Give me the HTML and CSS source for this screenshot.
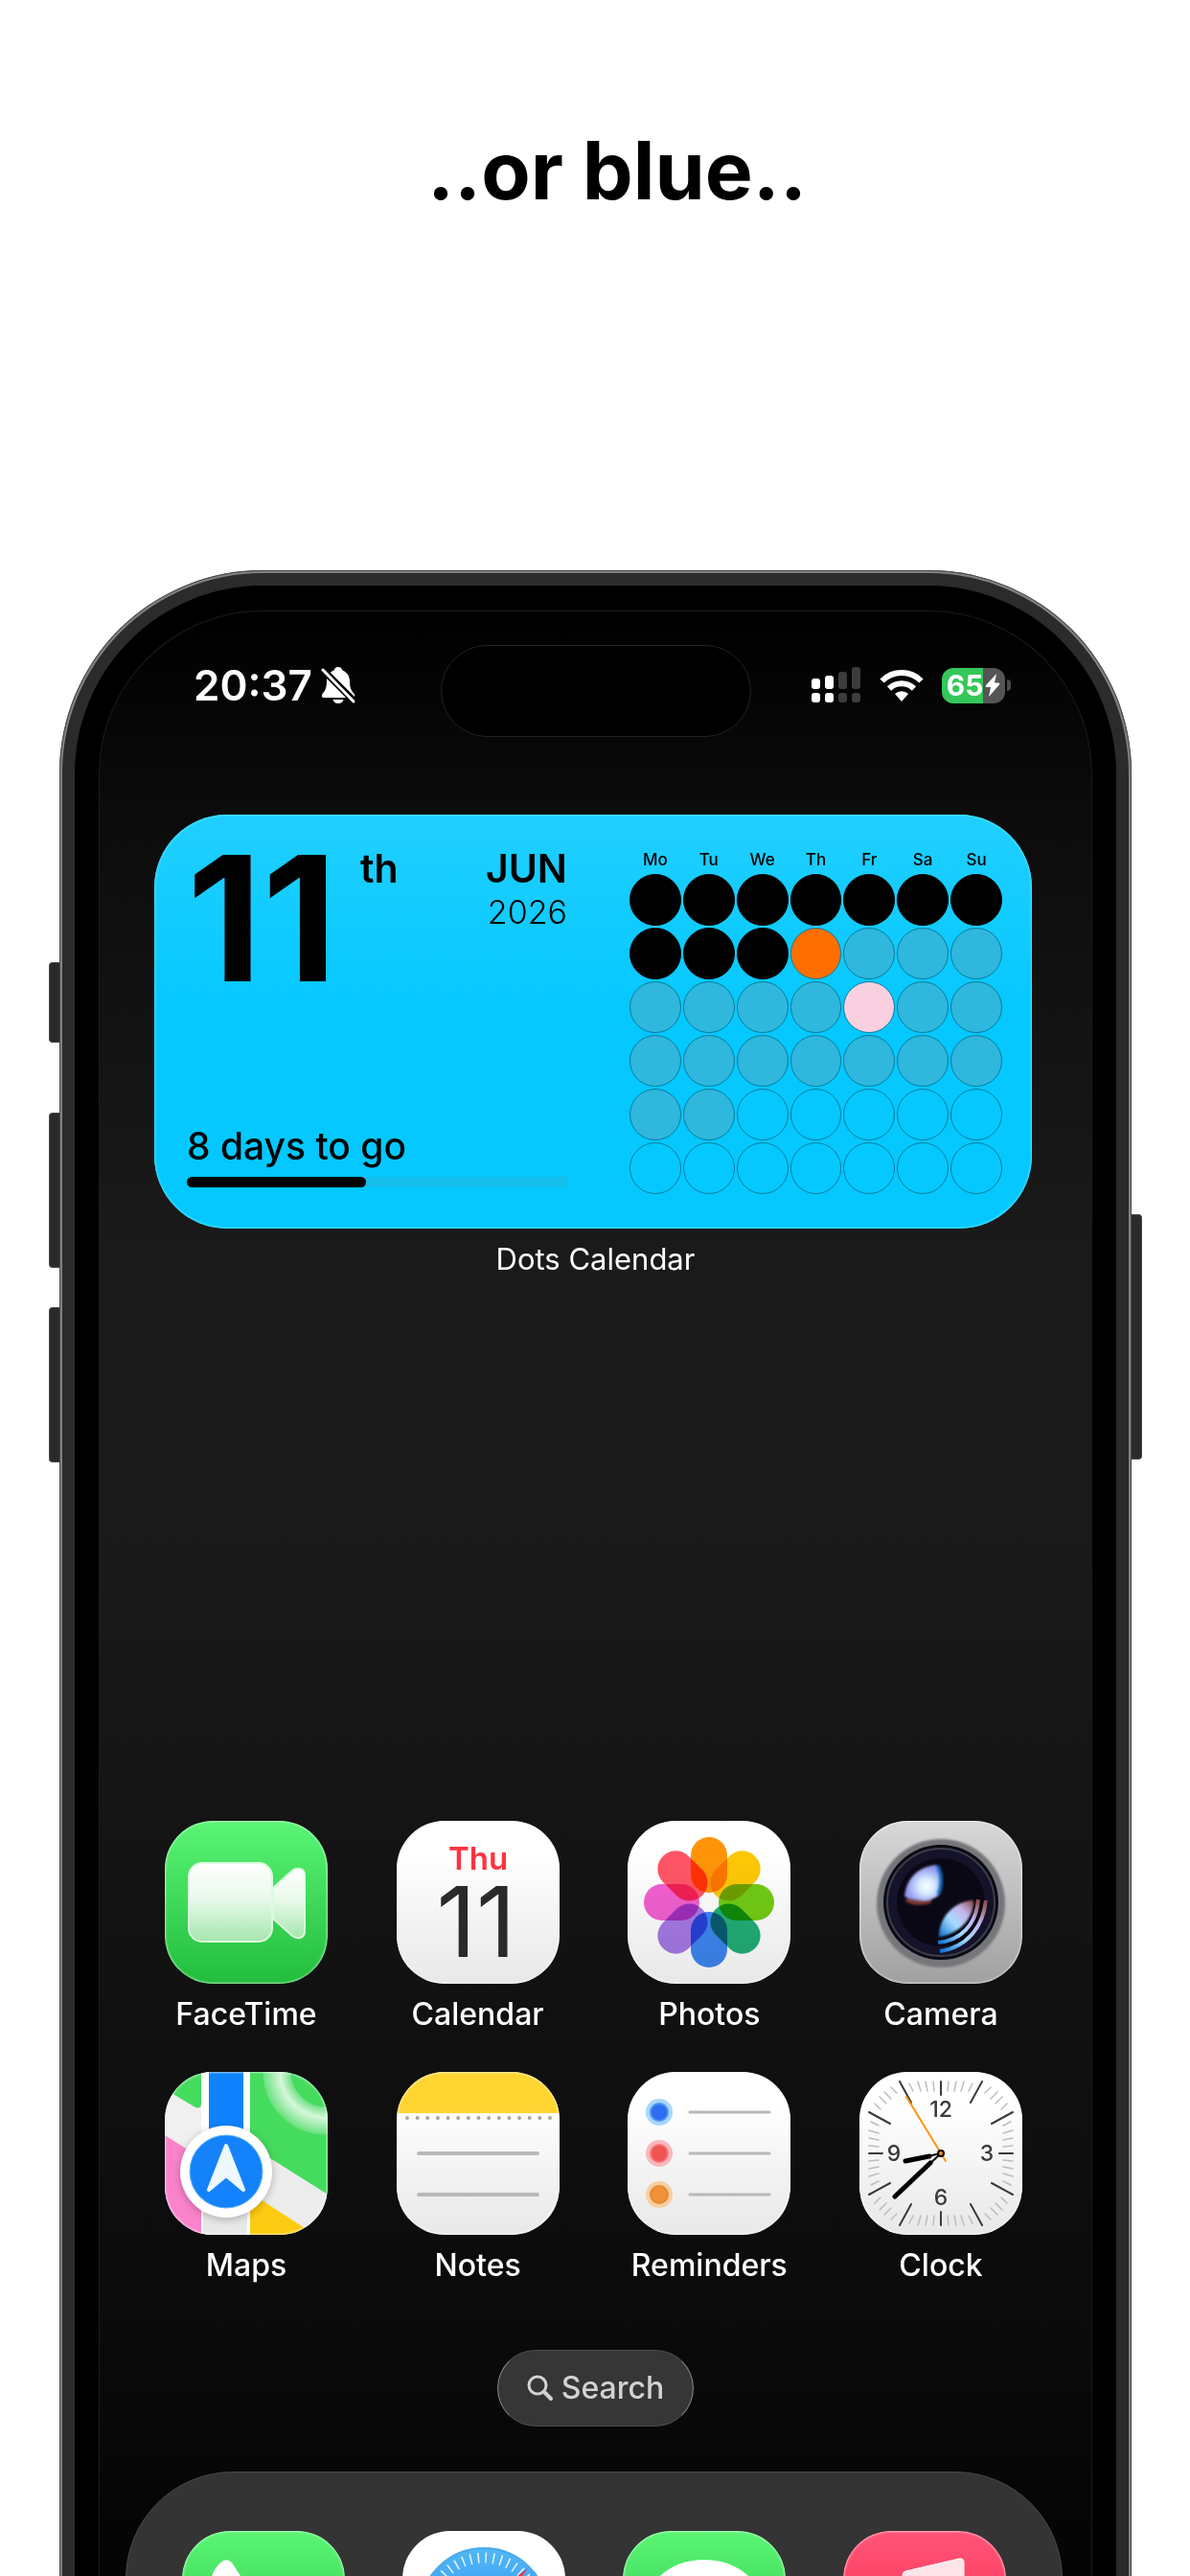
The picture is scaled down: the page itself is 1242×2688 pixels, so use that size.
FILE: index.html
```html
<!DOCTYPE html>
<html lang="en">
<head>
  <meta charset="UTF-8">
  <meta name="viewport" content="width=device-width, initial-scale=1.0">
  <title>Dots Calendar</title>
  <link rel="stylesheet" href="styles.css">
</head>
<body>
  <div class="page">
    <header class="headline">
      <h1>..or blue..</h1>
    </header>

    <main class="phone">
      <span class="side-button action"></span>
      <span class="side-button volume-up"></span>
      <span class="side-button volume-down"></span>
      <span class="side-button power"></span>

      <div class="bezel">
        <div class="screen">

          <div class="status">
            <div class="status-left">
              <span class="time">20:37</span>
              <svg class="bell" width="36" height="40" viewBox="0 0 36 40">
                <path fill="#fff" d="M18 1c2.600 0 4 1.500 4.400 3.600C27.500 6.500 30 11 30 16c0 7 2 10 4.500 13 1.500 2 .5 4-1.500 4H3c-2 0-3-2-1.500-4C4 26 6 23 6 16 6 11 8.500 6.500 13.600 4.600 14 2.500 15.400 1 18 1zM12.500 35h11c-.5 2.500-2.500 4-5.500 4s-5-1.500-5.500-4z"/>
                <path stroke="#050505" stroke-width="7" d="M1 3l34 34"/>
                <path stroke="#fff" stroke-width="3" stroke-linecap="round" d="M2 4l32 33"/>
              </svg>
            </div>
            <div class="island"></div>
            <div class="status-right">
              <svg width="52" height="38" viewBox="0 0 52 38">
                <g fill="#fff">
                  <rect x="0" y="12" width="9" height="11" rx="3"/>
                  <rect x="14" y="9" width="9" height="14" rx="3"/>
                  <rect x="0" y="27" width="9" height="10" rx="3"/>
                  <rect x="14" y="27" width="9" height="10" rx="3"/>
                </g>
                <g fill="#3c3c3c">
                  <rect x="28" y="5" width="9" height="18" rx="3"/>
                  <rect x="42" y="0" width="9" height="23" rx="3"/>
                  <rect x="28" y="27" width="9" height="10" rx="3"/>
                  <rect x="42" y="27" width="9" height="10" rx="3"/>
                </g>
              </svg>
              <svg width="46" height="34" viewBox="0 0 46 34" fill="none" stroke="#fff">
                <path stroke-width="6" d="M2.500 12.500a29 29 0 0 1 41 0"/>
                <path stroke-width="6" d="M10 20.500a18.500 18.500 0 0 1 26 0"/>
                <path fill="#fff" stroke="none" d="M23 34l-7-8a10.500 10.500 0 0 1 14 0z"/>
              </svg>
              <div class="battery">
                <span class="battery-body">65<svg width="16" height="24" viewBox="0 0 16 24"><path fill="#fff" d="M12 0L1 12q-1 2 1 2h4L4 24 15 11.500q1-2-1-2h-4z"/></svg></span>
                <span class="battery-cap"></span>
              </div>
            </div>
          </div>

          <section class="widget">
            <div class="today">
              <div class="date">
                <div class="day"><span class="number">11</span><span class="suffix">th</span></div>
                <div class="month-year">
                  <div class="month">JUN</div>
                  <div class="year">2026</div>
                </div>
              </div>
              <div class="countdown">
                <label for="countdown">8 days to go</label>
                <progress id="countdown" value="47" max="100"></progress>
              </div>
            </div>
            <table class="dots">
              <thead>
                <tr><th>Mo</th><th>Tu</th><th>We</th><th>Th</th><th>Fr</th><th>Sa</th><th>Su</th></tr>
              </thead>
              <tbody>
                <tr><td><i class="dot past"></i></td><td><i class="dot past"></i></td><td><i class="dot past"></i></td><td><i class="dot past"></i></td><td><i class="dot past"></i></td><td><i class="dot past"></i></td><td><i class="dot past"></i></td></tr>
                <tr><td><i class="dot past"></i></td><td><i class="dot past"></i></td><td><i class="dot past"></i></td><td><i class="dot now"></i></td><td><i class="dot future"></i></td><td><i class="dot future"></i></td><td><i class="dot future"></i></td></tr>
                <tr><td><i class="dot future"></i></td><td><i class="dot future"></i></td><td><i class="dot future"></i></td><td><i class="dot future"></i></td><td><i class="dot event"></i></td><td><i class="dot future"></i></td><td><i class="dot future"></i></td></tr>
                <tr><td><i class="dot future"></i></td><td><i class="dot future"></i></td><td><i class="dot future"></i></td><td><i class="dot future"></i></td><td><i class="dot future"></i></td><td><i class="dot future"></i></td><td><i class="dot future"></i></td></tr>
                <tr><td><i class="dot future"></i></td><td><i class="dot future"></i></td><td><i class="dot"></i></td><td><i class="dot"></i></td><td><i class="dot"></i></td><td><i class="dot"></i></td><td><i class="dot"></i></td></tr>
                <tr><td><i class="dot"></i></td><td><i class="dot"></i></td><td><i class="dot"></i></td><td><i class="dot"></i></td><td><i class="dot"></i></td><td><i class="dot"></i></td><td><i class="dot"></i></td></tr>
              </tbody>
            </table>
          </section>
          <p class="widget-name">Dots Calendar</p>

          <nav class="apps">
            <a class="app" href="#">
              <span class="icon green">
                <svg viewBox="0 0 170 170">
                  <defs>
                    <linearGradient id="cam" x1="0" y1="0" x2="0" y2="1">
                      <stop offset="0" stop-color="#fff"/>
                      <stop offset=".45" stop-color="#e9f9eb"/>
                      <stop offset="1" stop-color="#a5e6ae"/>
                    </linearGradient>
                  </defs>
                  <g fill="url(#cam)" stroke="#dcfbe0" stroke-width="2">
                    <path d="M113 70l20-18q4-3 8-2 5 1 5 7v58q0 6-5 7-4 1-8-2l-20-18z"/>
                    <rect x="25" y="44" width="87" height="82" rx="14"/>
                  </g>
                </svg>
              </span>
              <span class="label">FaceTime</span>
            </a>
            <a class="app" href="#">
              <span class="icon white">
                <svg viewBox="0 0 170 170" text-anchor="middle">
                  <text class="cal-day" x="85" y="51">Thu</text>
                  <text class="cal-date" x="83" y="142">11</text>
                </svg>
              </span>
              <span class="label">Calendar</span>
            </a>
            <a class="app" href="#">
              <span class="icon white">
                <svg class="petals" viewBox="0 0 170 170">
                  <rect x="66" y="17" width="38" height="58" rx="19" fill="#ff9408"/>
                  <rect x="66" y="17" width="38" height="58" rx="19" fill="#fdc806" transform="rotate(45 85 85)"/>
                  <rect x="66" y="17" width="38" height="58" rx="19" fill="#72cb14" transform="rotate(90 85 85)"/>
                  <rect x="66" y="17" width="38" height="58" rx="19" fill="#22ae76" transform="rotate(135 85 85)"/>
                  <rect x="66" y="17" width="38" height="58" rx="19" fill="#3d86f0" transform="rotate(180 85 85)"/>
                  <rect x="66" y="17" width="38" height="58" rx="19" fill="#a679e6" transform="rotate(225 85 85)"/>
                  <rect x="66" y="17" width="38" height="58" rx="19" fill="#f25fd0" transform="rotate(270 85 85)"/>
                  <rect x="66" y="17" width="38" height="58" rx="19" fill="#ff5566" transform="rotate(315 85 85)"/>
                </svg>
              </span>
              <span class="label">Photos</span>
            </a>
            <a class="app" href="#">
              <span class="icon silver">
                <svg viewBox="0 0 170 170">
                  <defs>
                    <radialGradient id="glow" cx=".6" cy=".6" r=".7">
                      <stop offset="0" stop-color="#fff"/>
                      <stop offset=".3" stop-color="#d6ebff"/>
                      <stop offset=".7" stop-color="#9aa2f2"/>
                      <stop offset="1" stop-color="#7f8ae0"/>
                    </radialGradient>
                    <linearGradient id="arc" x1="0" y1="1" x2="1" y2="0">
                      <stop offset="0" stop-color="#0b6fd0"/>
                      <stop offset=".4" stop-color="#a4dcff"/>
                      <stop offset=".7" stop-color="#c4b6f0"/>
                      <stop offset="1" stop-color="#8a4640"/>
                    </linearGradient>
                    <filter id="soft"><feGaussianBlur stdDeviation="1.200"/></filter>
                  </defs>
                  <circle cx="85" cy="86" r="67" fill="#74767a" filter="url(#soft)"/>
                  <circle cx="85" cy="85" r="60" fill="#0a0a12"/>
                  <circle cx="85" cy="85" r="56" fill="#15132a" stroke="#3d3d4c" stroke-width="2"/>
                  <circle cx="85" cy="85" r="46" fill="#0a0814"/>
                  <g filter="url(#soft)">
                    <path stroke="#7c3a36" stroke-width="5" fill="none" d="M49 82c8 4 18 4 26 1"/>
                    <path fill="url(#glow)" d="M47 79c2-19 14-31 33-33 6 9 7 22 2 32-7 7-22 6-35 1z"/>
                    <path stroke="#0c6fc4" stroke-width="4" fill="none" d="M81 47c5 9 5 21 1 30"/>
                    <path fill="url(#arc)" d="M83 121c0-20 15-37 36-38 1 16-13 35-36 38z"/>
                  </g>
                  <g fill="none" stroke="url(#arc)" stroke-width="4">
                    <path d="M82 127c23-2 40-18 42-45"/>
                    <path d="M84 136c28-4 45-25 48-53"/>
                  </g>
                </svg>
              </span>
              <span class="label">Camera</span>
            </a>
            <a class="app" href="#">
              <span class="icon map">
                <svg viewBox="0 0 170 170">
                  <defs>
                    <radialGradient id="ring" gradientUnits="userSpaceOnUse" cx="168" cy="0" r="66">
                      <stop offset=".55" stop-color="#6fe184"/>
                      <stop offset=".72" stop-color="#d6f7da"/>
                      <stop offset="1" stop-color="#67e07d"/>
                    </radialGradient>
                  </defs>
                  <path fill="#45dc5e" d="M0 0h38v33q0 6-6 4L0 18z"/>
                  <path fill="#fff" d="M38 0h51v170H38z"/>
                  <path fill="#e8e8e8" d="M40 130h46v40H40z"/>
                  <path fill="#0f83ff" d="M46 0h36v80H46z"/>
                  <path fill="#45dc5e" d="M89 0h81v128L89 77z"/>
                  <path fill="#ececec" d="M89 77l81 51v50L89 126z"/>
                  <circle cx="168" cy="0" r="51" fill="none" stroke="url(#ring)" stroke-width="29"/>
                  <path fill="#fb83cc" d="M0 66l38 24v80H0z"/>
                  <path fill="#fdcb12" d="M89 126l68 44H89z"/>
                  <circle class="puck" cx="64" cy="104" r="48" fill="#fff"/>
                  <circle cx="64" cy="104" r="38" fill="#1483fb" stroke="#62b2ff" stroke-width="1"/>
                  <path fill="#edf8ff" stroke="#edf8ff" stroke-width="4" stroke-linejoin="round" d="M64 77l18 46-18-15-18 15z"/>
                </svg>
              </span>
              <span class="label">Maps</span>
            </a>
            <a class="app" href="#">
              <span class="icon white">
                <svg viewBox="0 0 170 170">
                  <path fill="#fed531" d="M0 0h170v43H0z"/>
                  <path stroke="#a9a695" stroke-width="4" stroke-linecap="round" stroke-dasharray="0 10.640" d="M11 48h150"/>
                  <path stroke="#b8b8b8" stroke-width="4" stroke-linecap="round" d="M23 85h124M23 128h124"/>
                </svg>
              </span>
              <span class="label">Notes</span>
            </a>
            <a class="app" href="#">
              <span class="icon white">
                <svg viewBox="0 0 170 170">
                  <circle cx="33" cy="42" r="14" fill="#a9d6fb"/>
                  <circle cx="33" cy="42" r="9" fill="#2f6df0" stroke="#4a94f7" stroke-width="2"/>
                  <circle cx="33" cy="85" r="14" fill="#f9b8bc"/>
                  <circle cx="33" cy="85" r="9" fill="#ee5550" stroke="#f2777a" stroke-width="2"/>
                  <circle cx="33" cy="128" r="14" fill="#f7cfa2"/>
                  <circle cx="33" cy="128" r="9" fill="#f0913a" stroke="#e58a35" stroke-width="2"/>
                  <path stroke="#b8b8b8" stroke-width="3" stroke-linecap="round" d="M65 42h83M65 85h83M65 128h83"/>
                </svg>
              </span>
              <span class="label">Reminders</span>
            </a>
            <a class="app" href="#">
              <span class="icon white">
                <svg viewBox="0 0 170 170">
                  <defs>
                    <g id="ticks" fill="none" stroke-linecap="round">
                      <path stroke="#bdbdbd" stroke-width="1.500" d="M8-75L7-65M16-75L14-65M24-75L21-65M33-73L29-65M52-69L46-63M59-64L52-57M64-59L57-52M69-52L63-46M73-33L65-29M75-24L65-21M75-16L65-14M75-8L65-7"/>
                      <path stroke="#3a3a3a" stroke-width="2" d="M0-75V-61M43-75L31-53M75-43L53-31"/>
                    </g>
                  </defs>
                  <g transform="translate(85 85)">
                    <use href="#ticks"/>
                    <use href="#ticks" transform="rotate(90)"/>
                    <use href="#ticks" transform="rotate(180)"/>
                    <use href="#ticks" transform="rotate(270)"/>
                    <g class="clock-digits" text-anchor="middle">
                      <text x="0" y="-38">12</text>
                      <text x="48" y="8">3</text>
                      <text x="0" y="54">6</text>
                      <text x="-49" y="8">9</text>
                    </g>
                    <g stroke="#000" stroke-linecap="round">
                      <path stroke-width="2" d="M0 0l-37 8M0 0l-48 45"/>
                      <path stroke-width="5" d="M-12 3l-25 5M-11 10l-37 35"/>
                    </g>
                    <path stroke="#ff9412" stroke-width="2" stroke-linecap="round" d="M5 8l-41-67"/>
                    <circle r="3" fill="#ff9412" stroke="#000" stroke-width="2"/>
                  </g>
                </svg>
              </span>
              <span class="label">Clock</span>
            </a>
          </nav>

          <button class="search" type="button">
            <svg width="28" height="28" viewBox="0 0 28 28" fill="none" stroke="#d2d2d2" stroke-linecap="round">
              <circle cx="11" cy="11" r="9" stroke-width="3"/>
              <path stroke-width="4" d="M18 18l7 7"/>
            </svg>
            Search
          </button>

          <nav class="dock">
            <a class="icon green" href="#" aria-label="Phone">
              <svg viewBox="0 0 170 170">
                <path fill="#fff" d="M30 56c0-12 6-20 13-25q5-2 9 2l17 26c3 5 1 9-4 14-4 4-3 9 2 15l17 17c6 5 11 6 15 2 5-5 9-7 14-4l24 16q5 4 2 9c-5 8-13 13-25 13C76 141 30 94 30 56z"/>
              </svg>
            </a>
            <a class="icon white" href="#" aria-label="Safari">
              <svg viewBox="0 0 170 170">
                <defs>
                  <linearGradient id="sea" x1="0" y1="0" x2="0" y2="1">
                    <stop offset="0" stop-color="#52b9f7"/>
                    <stop offset="1" stop-color="#1672e8"/>
                  </linearGradient>
                </defs>
                <circle cx="85" cy="85" r="67" fill="url(#sea)" stroke="#4aa9e8" stroke-width="2"/>
                <circle cx="85" cy="85" r="57" fill="none" stroke="#e6f6ff" stroke-width="11" stroke-dasharray="1.500 6.453" stroke-dashoffset=".75"/>
                <path fill="#f5304a" d="M131 39L78 78l14 14z"/>
                <path fill="#fff" d="M39 131l39-53 14 14z"/>
              </svg>
            </a>
            <a class="icon green" href="#" aria-label="Messages">
              <svg viewBox="0 0 170 170">
                <path fill="#fff" d="M85 30c34 0 60 21 60 49s-26 49-60 49c-6 0-12-1-18-2-7 6-16 9-25 9 6-5 9-11 8-17-15-9-25-23-25-39 0-28 26-49 60-49z"/>
              </svg>
            </a>
            <a class="icon red" href="#" aria-label="Music">
              <svg viewBox="0 0 170 170">
                <path fill="#ffe3ea" stroke="#fff" stroke-width="1" d="M62 46q0-3 3-4l56-13q5-1 5 4v78c0 22-32 26-32 7 0-15 22-14 22-22V59l-44 9v52c0 22-33 26-33 7 0-15 23-14 23-22z"/>
              </svg>
            </a>
          </nav>

        </div>
      </div>
    </main>
  </div>
</body>
</html>
```

FILE: styles.css
```css
* {
  box-sizing: border-box;
}
body {
  margin: 0;
  background: #fff;
  font-family: Inter, "Liberation Sans", sans-serif;
}
.page {
  height: 100vh;
  overflow: hidden;
}
.headline {
  padding: 128px 0 367px 46px;
  text-align: center;
}
h1 {
  margin: 0;
  font-size: 84px;
  line-height: 100px;
  font-weight: 700;
}

/* phone body */
.phone {
  position: relative;
  margin: 0 61px 0 62px;
  padding: 16px 16px 0;
  border-radius: 212px 212px 0 0;
  background: #2b2b2b;
  box-shadow: inset 0 0 0 1px #4a4a4a, inset 0 0 0 3px #828282;
}
.bezel {
  padding: 26px 25px 0;
  border-radius: 196px 196px 0 0;
  background: #000;
}
.screen {
  border: 1px solid #1c1c14;
  border-bottom: 0;
  border-radius: 171px 171px 0 0;
  background: linear-gradient(#000 0, #0c0c0c 220px, #1a1a1a 660px, #1a1a1a 960px, #0b0b0b 1780px, #050505 2000px);
}
.side-button {
  position: absolute;
  left: -11px;
  width: 11px;
  border: 1px solid #4a4a4a;
  border-right: 0;
  border-radius: 4px 0 0 4px;
  background: #2a2a2a;
}
.action {
  top: 409px;
  height: 84px;
}
.volume-up {
  top: 566px;
  height: 162px;
}
.volume-down {
  top: 769px;
  height: 162px;
}
.power {
  top: 672px;
  left: auto;
  right: -11px;
  height: 256px;
  transform: scaleX(-1);
}

/* status bar */
.status {
  display: grid;
  grid-template-columns: 1fr 324px 1fr;
  align-items: center;
  padding-top: 35px;
  color: #fff;
}
.status-left,
.status-right {
  display: flex;
  align-items: center;
  padding-bottom: 12px;
}
.status-left {
  gap: 9px;
  padding-left: 98px;
}
.status-right {
  justify-content: flex-end;
  gap: 19px;
  padding-right: 84px;
}
.time {
  font-size: 44px;
  line-height: 48px;
  font-weight: 600;
}
.island {
  height: 96px;
  border: 1px solid #24241a;
  border-radius: 48px;
  background: #000;
}
.battery {
  display: flex;
  align-items: center;
  gap: 2px;
}
.battery-body {
  display: flex;
  align-items: center;
  justify-content: center;
  gap: 2px;
  width: 66px;
  height: 37px;
  border-radius: 12px;
  background: linear-gradient(90deg, #34c759 65%, #555 65%);
  font-size: 30px;
  font-weight: 700;
}
.battery-cap {
  width: 4px;
  height: 12px;
  border-radius: 0 4px 4px 0;
  background: #4a4a4a;
}

/* widget */
.widget {
  display: flex;
  justify-content: space-between;
  margin: 81px 62px 0 57px;
  padding: 34px 30px 35px 34px;
  border-radius: 76px;
  background: linear-gradient(#20cfff, #04c8ff 50%);
  box-shadow: inset 0 0 2px 1px #4ce0ff;
  color: #000;
}
.today {
  display: flex;
  flex-direction: column;
  justify-content: space-between;
  width: 397px;
}
.date {
  display: flex;
  justify-content: space-between;
}
.day {
  display: flex;
  gap: 24px;
}
.number {
  font-size: 182px;
  line-height: 148px;
  font-weight: 700;
  font-kerning: none;
}
.suffix,
.month {
  font-size: 41px;
  line-height: 44px;
  font-weight: 600;
}
.month-year {
  text-align: right;
}
.year {
  font-size: 34px;
  line-height: 48px;
  font-weight: 300;
}
.countdown label {
  display: block;
  font-size: 39px;
  line-height: 52px;
  font-weight: 500;
}
.countdown progress {
  display: block;
  width: 100%;
  height: 11px;
  margin: 6px 0 8px;
  border: 0;
  background: #14bdec;
  appearance: none;
}
progress::-webkit-progress-bar {
  background: #14bdec;
}
progress::-webkit-progress-value {
  border-radius: 6px;
  background: #000;
}
.dots {
  width: 391px;
  table-layout: fixed;
  border-collapse: collapse;
}
.dots th {
  padding: 4px 0 5px;
  font-size: 17px;
  line-height: 18px;
  font-weight: 500;
}
.dots td {
  padding: 1px;
}
.dot {
  display: block;
  aspect-ratio: 1;
  border: 1px solid #087a9a;
  border-radius: 50%;
}
.past {
  border-color: #000;
  background: #000;
}
.future {
  background: #2fb7de;
}
.now {
  background: #ff6f00;
}
.event {
  background: #f8d0df;
}
.widget-name {
  margin: 10px 0 564px;
  color: #fff;
  font-size: 31px;
  line-height: 44px;
  text-align: center;
}

/* app icons */
.apps {
  display: grid;
  grid-template-columns: repeat(4, 170px);
  justify-content: space-between;
  row-gap: 40px;
  padding: 0 72px 0 68px;
}
.app {
  display: flex;
  flex-direction: column;
  align-items: center;
  gap: 12px;
  color: #fff;
  text-decoration: none;
}
.label {
  font-size: 32px;
  line-height: 40px;
  font-weight: 500;
}
.icon {
  position: relative;
  display: block;
  width: 170px;
  height: 170px;
  overflow: hidden;
  border-radius: 50px;
}
.icon svg {
  display: block;
}
/* light rim that lies over the artwork */
.icon::after {
  content: "";
  position: absolute;
  inset: 0;
  border-radius: inherit;
  box-shadow: inset 0 0 2px 1px rgba(255, 255, 255, 0.6);
}
.green {
  background: linear-gradient(#5af575, #22bd3c);
}
.white {
  background: linear-gradient(#fff 20%, #e8e8e8);
}
.silver {
  background: linear-gradient(#d8d8d8, #a0a0a0);
}
.map {
  background: #f0f0f0;
}
.red {
  background: linear-gradient(#ff5577, #fa1e44);
}
.petals rect {
  mix-blend-mode: multiply;
}
.cal-day {
  fill: #ff3340;
  font-size: 33px;
  font-weight: 600;
}
.cal-date {
  fill: #2a2a2a;
  font-size: 102px;
  font-weight: 400;
}
.clock-digits {
  fill: #3a3a3a;
  font-size: 23px;
  font-weight: 500;
}
.puck {
  filter: drop-shadow(0 2px 4px rgba(0, 0, 0, 0.25));
}

.search {
  display: flex;
  align-items: center;
  gap: 8px;
  height: 80px;
  margin: 68px auto 47px;
  padding: 0 30px;
  border: 1px solid #4c4c4c;
  border-left-color: #8a8a8a;
  border-right-color: #8a8a8a;
  border-radius: 40px;
  background: #363636;
  color: #d2d2d2;
  font: 500 32px Inter, "Liberation Sans", sans-serif;
}
.dock {
  display: flex;
  justify-content: space-between;
  margin: 0 30px 0 27px;
  padding: 61px 58px;
  border: 1px solid #4a4a4a;
  border-radius: 112px;
  background: #343434;
}
```
